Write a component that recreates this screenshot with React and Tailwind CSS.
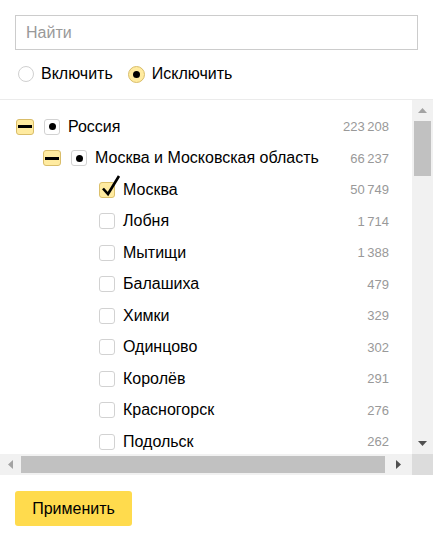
import React from "react";

const rows = [
  { level: 0, label: "Россия", count: "223\u2009208", expander: true, state: "partial" },
  { level: 1, label: "Москва и Московская область", count: "66\u2009237", expander: true, state: "partial" },
  { level: 2, label: "Москва", count: "50\u2009749", state: "checked" },
  { level: 2, label: "Лобня", count: "1\u2009714" },
  { level: 2, label: "Мытищи", count: "1\u2009388" },
  { level: 2, label: "Балашиха", count: "479" },
  { level: 2, label: "Химки", count: "329" },
  { level: 2, label: "Одинцово", count: "302" },
  { level: 2, label: "Королёв", count: "291" },
  { level: 2, label: "Красногорск", count: "276" },
  { level: 2, label: "Подольск", count: "262" },
];

function Expander() {
  return (
    <div className="w-[18px] h-[16px] rounded-[3px] bg-[#ffeba0] border border-[#d9bd6a] flex items-center justify-center">
      <div className="w-[14px] h-[3px] bg-black" />
    </div>
  );
}

function Checkbox({ state }) {
  if (state === "checked") {
    return (
      <div className="relative w-[16px] h-[16px] rounded-[3px] bg-[#ffeba0] border border-[#dcc06c] shrink-0">
        <svg className="absolute left-[1px] top-[-9px]" width="20" height="23" viewBox="0 0 20 23">
          <path d="M2 14.5 L7 20 L18 2" fill="none" stroke="#000" strokeWidth="2.6" />
        </svg>
      </div>
    );
  }
  return (
    <div className="w-[16px] h-[16px] rounded-[3px] bg-white border border-[#d2d2d2] flex items-center justify-center shrink-0">
      {state === "partial" && <div className="w-[7px] h-[7px] rounded-full bg-black" />}
    </div>
  );
}

function Row({ row }) {
  const pad = ["pl-[16px]", "pl-[43px]", "pl-[71px]"][row.level];
  return (
    <div className={`flex items-center h-[31.5px] pr-[23px] ${pad}`}>
      <div className="w-[28px] shrink-0">{row.expander && <Expander />}</div>
      <Checkbox state={row.state} />
      <span className="ml-[8px] text-[16px] text-black whitespace-nowrap">{row.label}</span>
      <span className="ml-auto text-[13px] text-[#999] whitespace-nowrap">{row.count}</span>
    </div>
  );
}

export default function App() {
  return (
    <div className="w-[433px] h-[541px] bg-white font-['Liberation_Sans',Arial,sans-serif] text-black">
      <div className="px-[15px] pt-[15px] pb-[17px] border-b border-[#ebebeb]">
        <div className="h-[35px] border border-[#cccccc] flex items-center pl-[10px] text-[16px] text-[#999]">
          Найти
        </div>
        <div className="mt-[16px] h-[16px] flex items-center text-[16px]">
          <div className="ml-[3px] w-[16px] h-[16px] rounded-full border border-[#d0d0d0] bg-white" />
          <span className="ml-[7px]">Включить</span>
          <div className="ml-[15px] w-[17px] h-[17px] rounded-full border border-[#d9bd6a] bg-[#ffeba0] flex items-center justify-center">
            <div className="w-[7px] h-[7px] rounded-full bg-black" />
          </div>
          <span className="ml-[7px]">Исключить</span>
        </div>
      </div>

      <div className="h-[375px] flex flex-col">
        <div className="flex flex-1 min-h-0">
          <div className="flex-1 overflow-hidden pt-[11px]">
            {rows.map((r) => (
              <Row key={r.label} row={r} />
            ))}
          </div>
          <div className="w-[21px] bg-[#f1f1f1] flex flex-col items-center">
            <div className="h-[21px] flex items-center justify-center">
              <svg width="9" height="5" viewBox="0 0 9 5"><path d="M0 5 L4.5 0 L9 5Z" fill="#a3a3a3" /></svg>
            </div>
            <div className="w-[17px] h-[55px] bg-[#c1c1c1]" />
            <div className="flex-1" />
            <div className="h-[21px] flex items-center justify-center">
              <svg width="9" height="5" viewBox="0 0 9 5"><path d="M0 0 L9 0 L4.5 5Z" fill="#505050" /></svg>
            </div>
          </div>
        </div>
        <div className="h-[21px] flex">
          <div className="flex-1 bg-[#f1f1f1] flex items-center">
            <div className="w-[21px] flex items-center justify-center">
              <svg width="5" height="9" viewBox="0 0 5 9"><path d="M5 0 L0 4.5 L5 9Z" fill="#a3a3a3" /></svg>
            </div>
            <div className="w-[364px] h-[17px] bg-[#c1c1c1]" />
            <div className="flex-1 flex items-center justify-center">
              <svg width="5" height="9" viewBox="0 0 5 9"><path d="M0 0 L5 4.5 L0 9Z" fill="#505050" /></svg>
            </div>
          </div>
          <div className="w-[21px] bg-[#dcdcdc]" />
        </div>
      </div>

      <div className="px-[15px] pt-[16px]">
        <button className="w-[117px] h-[35px] rounded-[3px] bg-[#ffdb4d] text-[16px] text-black">
          Применить
        </button>
      </div>
    </div>
  );
}
